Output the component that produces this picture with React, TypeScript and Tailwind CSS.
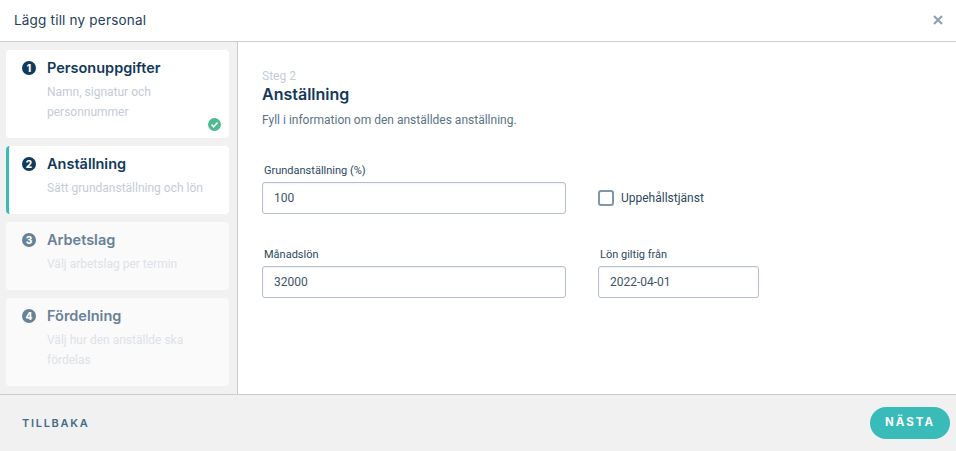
const heading = "font-['Inter',sans-serif]"

type Step = {
  num: number
  title: string
  desc: string[]
  active?: boolean
  disabled?: boolean
  done?: boolean
}

const steps: Step[] = [
  { num: 1, title: 'Personuppgifter', desc: ['Namn, signatur och', 'personnummer'], done: true },
  { num: 2, title: 'Anställning', desc: ['Sätt grundanställning och lön'], active: true },
  { num: 3, title: 'Arbetslag', desc: ['Välj arbetslag per termin'], disabled: true },
  { num: 4, title: 'Fördelning', desc: ['Välj hur den anställde ska', 'fördelas'], disabled: true },
]

function StepCard({ step }: { step: Step }) {
  return (
    <div
      className={`relative rounded-[4px] pr-2 pt-[8px] pb-[8px] ${
        step.desc.length > 1 ? 'h-[88px]' : 'h-[68px]'
      } ${step.disabled ? 'bg-[#fafafa]' : 'bg-white'} ${step.active ? 'border-l-[3px] border-[#38bbb9] pl-[13px]' : 'pl-[16px]'}`}
    >
      <div className="flex items-center h-[20px]">
        <span
          className={`w-[14px] h-[14px] rounded-full flex items-center justify-center text-white text-[10px] font-extrabold leading-none ${heading} ${
            step.disabled ? 'bg-[#678197]' : 'bg-[#12395b]'
          }`}
        >
          {step.num}
        </span>
        <span
          className={`ml-[11px] text-[14.5px] font-semibold ${heading} ${
            step.disabled ? 'text-[#678197]' : 'text-[#12395b]'
          }`}
        >
          {step.title}
        </span>
      </div>
      <div className={`ml-[25px] mt-[4px] text-[12px] leading-[20px] ${step.disabled ? 'text-[#dde2e7]' : 'text-[#c3ccd5]'}`}>
        {step.desc.map((line) => (
          <div key={line}>{line}</div>
        ))}
      </div>
      {step.done && (
        <svg className="absolute right-[8px] bottom-[7px] w-[13px] h-[13px]" viewBox="0 0 14 14" aria-hidden="true">
          <circle cx="7" cy="7" r="7" fill="#4fba90" />
          <path d="M3.8 7.2l2.2 2.2 4.2-4.4" fill="none" stroke="white" strokeWidth="1.8" />
        </svg>
      )}
    </div>
  )
}

function Field({ label, value, width }: { label: string; value: string; width: string }) {
  return (
    <div className={width}>
      <div className="pl-[2px] text-[11px] leading-[16px] text-[#2d4760] mb-[3px]">{label}</div>
      <div className="h-[32px] rounded-[3px] border border-[#b4c0cb] pl-[11px] flex items-center text-[12px] text-[#3c5468] shadow-[inset_0_1px_2px_rgba(0,0,0,0.06)]">
        {value}
      </div>
    </div>
  )
}

export default function App() {
  return (
    <div className="w-[956px] h-[451px] bg-white flex flex-col overflow-hidden font-['Roboto',sans-serif]">
      <header className="h-[42px] shrink-0 border-b border-[#cccccc] pl-[14px] pr-[13px] pb-[1px] flex items-center justify-between">
        <span className={`text-[13.5px] font-normal text-[#24405a] tracking-[0.2px] ${heading}`}>Lägg till ny personal</span>
        <svg className="w-[10px] h-[10px]" viewBox="0 0 10 10" aria-hidden="true">
          <path d="M1 1l8 8M9 1L1 9" stroke="#8ba0b1" strokeWidth="2" fill="none" />
        </svg>
      </header>

      <div className="flex-1 flex min-h-0">
        <aside className="w-[238px] shrink-0 bg-[#f1f1f1] border-r border-[#cccccc] pl-[6px] pr-[8px] pt-[8px] flex flex-col gap-[8px]">
          {steps.map((s) => (
            <StepCard key={s.num} step={s} />
          ))}
        </aside>

        <main className="flex-1 pl-[24px] pt-[27px]">
          <div className="text-[12px] leading-[14px] text-[#c3ccd5]">Steg 2</div>
          <h2 className={`text-[16px] leading-[22px] font-semibold text-[#12395b] ${heading}`}>Anställning</h2>
          <p className="mt-[6px] text-[12px] leading-[18px] text-[#5c7387]">Fyll i information om den anställdes anställning.</p>

          <div className="mt-[34px] flex gap-[32px]">
            <Field label="Grundanställning (%)" value="100" width="w-[304px]" />
            <div className="h-[32px] self-end flex items-center gap-[7px]">
              <span className="w-[16px] h-[16px] rounded-[3px] border-2 border-[#7f97aa]" />
              <span className="text-[12px] text-[#2d4760]">Uppehållstjänst</span>
            </div>
          </div>

          <div className="mt-[33px] flex gap-[32px]">
            <Field label="Månadslön" value="32000" width="w-[304px]" />
            <Field label="Lön giltig från" value="2022-04-01" width="w-[161px]" />
          </div>
        </main>
      </div>

      <footer className="h-[57px] shrink-0 bg-[#f1f1f1] border-t border-[#cccccc] pl-[22px] pr-[6px] flex items-center justify-between">
        <span className={`text-[11px] font-semibold tracking-[1.7px] text-[#456b8a] ${heading}`}>TILLBAKA</span>
        <span className={`w-[80px] h-[32px] rounded-full bg-[#38bbb9] flex items-center justify-center text-white text-[11.5px] font-bold tracking-[2px] ${heading}`}>
          NÄSTA
        </span>
      </footer>
    </div>
  )
}
